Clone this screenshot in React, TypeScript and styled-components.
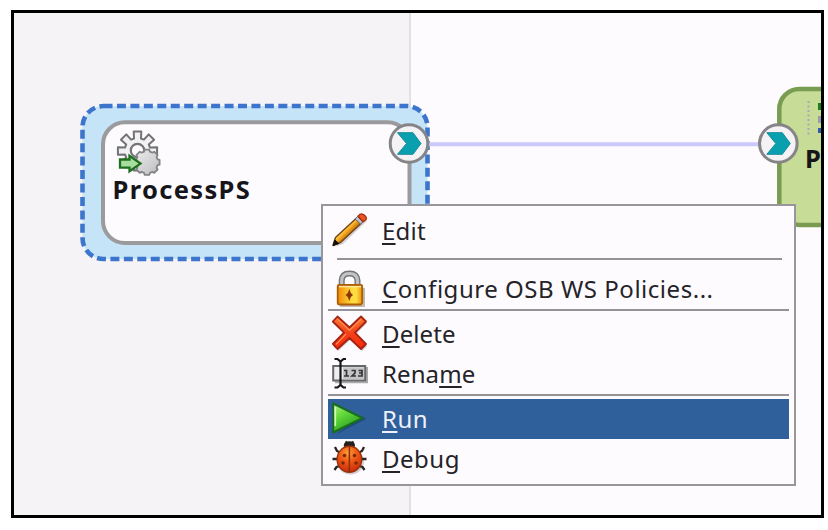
import React from "react";
import styled, { createGlobalStyle } from "styled-components";

const GlobalStyle = createGlobalStyle`
  * { box-sizing: border-box; }
  body { margin: 0; background: #fff; font-family: "Noto Sans", "Open Sans", sans-serif; }
`;

const Page = styled.main`
  width: 828px;
  height: 530px;
  padding: 10px 4px 12px 11px;
`;

const Editor = styled.section`
  position: relative;
  display: flex;
  width: 813px;
  height: 508px;
  border: 3px solid #000;
  overflow: hidden;
`;

const Lane = styled.div<{ $side?: boolean }>`
  flex: ${(p) => (p.$side ? "0 0 397px" : "1")};
  background: ${(p) => (p.$side ? "#f6f3f6" : "#fefbff")};
  border-right: ${(p) => (p.$side ? "2px solid #e2e0e3" : "none")};
`;

const Diagram = styled.svg`
  position: absolute;
  left: 0;
  top: 0;
`;

const NodeTitle = styled.span<{ $x: number; $y: number; $spacing?: number }>`
  position: absolute;
  left: ${(p) => p.$x}px;
  top: ${(p) => p.$y}px;
  font-size: 25.5px;
  line-height: 30px;
  font-weight: 700;
  letter-spacing: ${(p) => p.$spacing ?? 0}px;
  color: #16161a;
`;

const Menu = styled.ul`
  position: absolute;
  left: 307px;
  top: 191px;
  width: 475px;
  height: 282px;
  margin: 0;
  padding: 5px;
  list-style: none;
  background: #fefbff;
  border: 2px solid #98969a;
`;

const Item = styled.li<{ $active?: boolean }>`
  display: flex;
  align-items: center;
  height: 40px;
  background: ${(p) => (p.$active ? "#30609c" : "transparent")};
  color: ${(p) => (p.$active ? "#eef2fa" : "#242328")};
`;

const Label = styled.span<{ $spacing: number }>`
  margin-left: 10px;
  font-size: 24px;
  line-height: 40px;
  white-space: pre;
  letter-spacing: ${(p) => p.$spacing}px;
`;

const Key = styled.u`
  text-decoration-thickness: 2px;
  text-underline-offset: 3px;
  text-decoration-skip-ink: none;
`;

const Separator = styled.li<{ $inset?: boolean }>`
  height: 2px;
  margin: ${(p) => (p.$inset ? "7px 7px 9px 9px" : "0 0 3px")};
  background: #949296;
`;

const MenuIcon = styled.svg`
  flex: none;
  width: 44px;
  height: 40px;
`;

const gearPath = (cx: number, cy: number, outer: number, inner: number, teeth = 8) => {
  const points: string[] = [];
  for (let i = 0; i < teeth; i++) {
    const mid = (i / teeth) * Math.PI * 2 - Math.PI / 2;
    const corners: [number, number][] = [
      [inner, -0.27],
      [outer, -0.19],
      [outer, 0.19],
      [inner, 0.27],
    ];
    corners.forEach(([r, a]) =>
      points.push(`${(cx + r * Math.cos(mid + a)).toFixed(1)} ${(cy + r * Math.sin(mid + a)).toFixed(1)}`)
    );
  }
  return `M${points.join("L")}Z`;
};

const Port = ({ x, y }: { x: number; y: number }) => (
  <g transform={`translate(${x} ${y})`}>
    <circle r="18.8" fill="#f5f2f6" stroke="#858487" strokeWidth="3" />
    <path d="M-11.5-10.8H4L12 0 4 10.8H-11.5L-2.5 0Z" fill="#08a0ae" stroke="#168b99" strokeWidth="1" />
  </g>
);

const PencilIcon = () => (
  <MenuIcon viewBox="0 0 44 40">
    <defs>
      <linearGradient id="wood" gradientUnits="userSpaceOnUse" x1="15" y1="15" x2="22" y2="22">
        <stop offset=".1" stopColor="#ffe780" />
        <stop offset=".55" stopColor="#fdb528" />
        <stop offset="1" stopColor="#c9780f" />
      </linearGradient>
    </defs>
    <path d="M7 36L15 33 39 10 37 7Z" fill="#777" opacity=".3" />
    <path d="M5 34.5L7.5 26.5 28 7.5 33 12.5 12.5 31.5Z" fill="url(#wood)" stroke="#70431a" strokeWidth="1.4" strokeLinejoin="round" />
    <path d="M5 34.5L6.8 29 10.8 32.5Z" fill="#17110c" stroke="#17110c" />
    <path d="M27 8L29.5 5.5 35 11 32.5 13Z" fill="#bfc3c7" stroke="#62656a" />
    <path d="M30 5.3L32 3.2Q34 2 36.8 4.6T37.5 9L35 10.8Z" fill="#e9571d" stroke="#a32e16" strokeWidth="1.3" />
  </MenuIcon>
);

const LockIcon = () => (
  <MenuIcon viewBox="0 0 44 40">
    <defs>
      <linearGradient id="brass">
        <stop stopColor="#f08a08" />
        <stop offset=".55" stopColor="#ffd73b" />
        <stop offset=".75" stopColor="#ffdf45" />
        <stop offset="1" stopColor="#e79308" />
      </linearGradient>
    </defs>
    <path d="M12 37H36V19" fill="none" stroke="#9a9084" strokeWidth="2" opacity=".6" />
    <path d="M13.7 17V11.5Q14 4.5 21.5 4.5T29.5 11.5V17" fill="none" stroke="#747577" strokeWidth="6" />
    <path d="M13.7 17V11.5Q14 4.5 21.5 4.5T29.5 11.5V17" fill="none" stroke="#c2c3c4" strokeWidth="3.2" />
    <rect x="9.7" y="16" width="24.5" height="19.5" rx="1.5" fill="url(#brass)" stroke="#ad5d06" strokeWidth="1.8" />
    <path d="M11 17.6H33" stroke="#ffe79a" strokeWidth="1.5" />
    <path d="M21.3 20L22.8 24 25 26 22.8 28 21.3 32 19.8 28 17.6 26 19.8 24Z" fill="#8b3706" />
  </MenuIcon>
);

const DeleteIcon = () => (
  <MenuIcon viewBox="0 0 44 40">
    <defs>
      <linearGradient id="cross" x2="0" y2="1">
        <stop stopColor="#ff7a32" />
        <stop offset=".5" stopColor="#f2421a" />
        <stop offset="1" stopColor="#ff2608" />
      </linearGradient>
    </defs>
    <path d="M10 4L22 15 34 4 39 9 28 20 39 32 34 37 22 26 10 37 6 33 17 20 6 9Z" fill="#777" opacity=".4" />
    <path d="M9.5 2.5L21.5 13.5 33 2.5 38 7.5 27 18.7 38 30 33 35 21.5 24 9.5 35 4.8 30 16 18.7 4.8 7.5Z" fill="url(#cross)" stroke="#a52313" strokeWidth="1.8" strokeLinejoin="round" />
    <path d="M9.5 5L21.5 16.3 33 5.3M8 30.5L18 20" fill="none" stroke="#ff8a50" strokeWidth="1.2" />
  </MenuIcon>
);

const RenameIcon = () => (
  <MenuIcon viewBox="0 0 44 40">
    <path d="M7 28.2H39V13" fill="none" stroke="#aaa" strokeWidth="2" />
    <rect x="5.2" y="12" width="32" height="14.5" fill="#eeeeef" stroke="#66676a" strokeWidth="2" />
    <rect x="15" y="13.3" width="21" height="12" fill="#c4c4c7" />
    <path d="M16 16.5H18.5V22M16 22H21M23.5 16.5H27V19L24 22H28M30.5 16.5H34V22H30M31 19H34" fill="none" stroke="#353538" strokeWidth="1.7" />
    <path d="M6.5 5H9.5L12.5 7.5 15.5 5H18M12.5 7V32M6.5 33.5H9.5L12.5 31 15.5 33.5H18" fill="none" stroke="#161618" strokeWidth="2.2" />
  </MenuIcon>
);

const RunIcon = () => (
  <MenuIcon viewBox="0 0 44 40">
    <defs>
      <linearGradient id="play" x2=".6" y2="1">
        <stop stopColor="#b6ef8d" />
        <stop offset=".4" stopColor="#65da3c" />
        <stop offset="1" stopColor="#22981a" />
      </linearGradient>
    </defs>
    <path d="M7 36L38 20 34 17Z" fill="#173c65" opacity=".6" />
    <path d="M5.2 4.5V33.5L34.5 19Z" fill="url(#play)" stroke="#196d20" strokeWidth="2" strokeLinejoin="round" />
    <path d="M7.3 8V27" stroke="#d7ffc0" strokeWidth="1.6" />
  </MenuIcon>
);

const BugIcon = () => (
  <MenuIcon viewBox="0 0 44 40">
    <defs>
      <radialGradient id="shell" cx=".45" cy=".25" r=".75">
        <stop stopColor="#ffa035" />
        <stop offset=".45" stopColor="#f05a16" />
        <stop offset="1" stopColor="#c92c08" />
      </radialGradient>
    </defs>
    <ellipse cx="22.5" cy="22.5" rx="13.5" ry="13" fill="#777" opacity=".35" />
    <path d="M13 14L9 12 7 8M10 20H4.5M12 27L8.5 28 6.5 31M30 14L34 12 36 8M33 20H38.5M31 27L34.5 28 36.5 31" fill="none" stroke="#292321" strokeWidth="2.3" />
    <ellipse cx="21.4" cy="6.2" rx="5.6" ry="4" fill="#242120" />
    <path d="M19 4L17.5 2.5M24 4L25.5 2.5" stroke="#242120" strokeWidth="1.8" />
    <ellipse cx="21.4" cy="20.3" rx="12.3" ry="13" fill="url(#shell)" stroke="#9b310c" strokeWidth="1.4" />
    <path d="M21.4 8V33" stroke="#8b2c0a" strokeWidth="1.5" />
    <g fill="#7a290b">
      <circle cx="16.5" cy="16.5" r="1.8" />
      <circle cx="26.5" cy="16.5" r="1.8" />
      <circle cx="15" cy="24" r="1.8" />
      <circle cx="28" cy="24" r="1.8" />
    </g>
  </MenuIcon>
);

const App = () => (
  <>
    <GlobalStyle />
    <Page>
      <Editor>
        <Lane $side />
        <Lane />
        <Diagram width="807" height="502" viewBox="14 13 807 502">
          <defs>
            <linearGradient id="cog" x2="1" y2="1">
              <stop stopColor="#ededee" />
              <stop offset="1" stopColor="#bcbcbe" />
            </linearGradient>
          </defs>
          <rect x="82.5" y="106" width="345" height="153" rx="21" fill="#c6e4f7" stroke="#3d75cd" strokeWidth="4.6" strokeDasharray="9 4.45" />
          <rect x="103" y="122.3" width="306.5" height="120.7" rx="22" fill="#fefbff" stroke="#9b9a9d" strokeWidth="4" />
          <path d="M428 144.3H760" stroke="#cbc8fb" strokeWidth="4" />
          <rect x="779.3" y="89" width="100" height="136" rx="20" fill="#c7dc97" stroke="#799c50" strokeWidth="4.5" />
          <path d="M808.5 101V135" stroke="#aaa5bb" strokeWidth="2" strokeDasharray="2 2.5" />
          <path d="M818 106.5H823" stroke="#16811d" strokeWidth="7" />
          <path d="M818 119.5H823" stroke="#9c9bae" strokeWidth="7" />
          <path d="M818 130.5H823" stroke="#3359ae" strokeWidth="5" />
          <path d={gearPath(137.5, 151, 20, 13)} fill="#f1f0f2" stroke="#737376" strokeWidth="2" strokeLinejoin="round" />
          <circle cx="137.5" cy="150.5" r="6.7" fill="#fefbff" stroke="#737376" strokeWidth="2.2" />
          <path d={gearPath(147, 162.3, 12.8, 11)} fill="url(#cog)" stroke="#848487" strokeWidth="1.8" strokeLinejoin="round" />
          <path d="M120 159.5H129.5V155.8L140.5 163.6 129.5 171.3V167.7H120Z" fill="#a8dda0" stroke="#1e701f" strokeWidth="2.3" />
          <Port x={409} y={143.5} />
          <Port x={778.3} y={143.5} />
        </Diagram>
        <NodeTitle $x={98.5} $y={161} $spacing={1.35}>ProcessPS</NodeTitle>
        <NodeTitle $x={791} $y={129.5}>P</NodeTitle>
        <Menu>
          <Item><PencilIcon /><Label $spacing={0.2}><Key>E</Key>dit</Label></Item>
          <Separator $inset />
          <Item><LockIcon /><Label $spacing={0.53}><Key>C</Key>onfigure OSB WS Policies...</Label></Item>
          <Separator />
          <Item><DeleteIcon /><Label $spacing={0.1}><Key>D</Key>elete</Label></Item>
          <Item><RenameIcon /><Label $spacing={0.1}>Rena<Key>m</Key>e</Label></Item>
          <Separator />
          <Item $active><RunIcon /><Label $spacing={0.5}><Key>R</Key>un</Label></Item>
          <Item><BugIcon /><Label $spacing={0.5}><Key>D</Key>ebug</Label></Item>
        </Menu>
      </Editor>
    </Page>
  </>
);

export default App;
